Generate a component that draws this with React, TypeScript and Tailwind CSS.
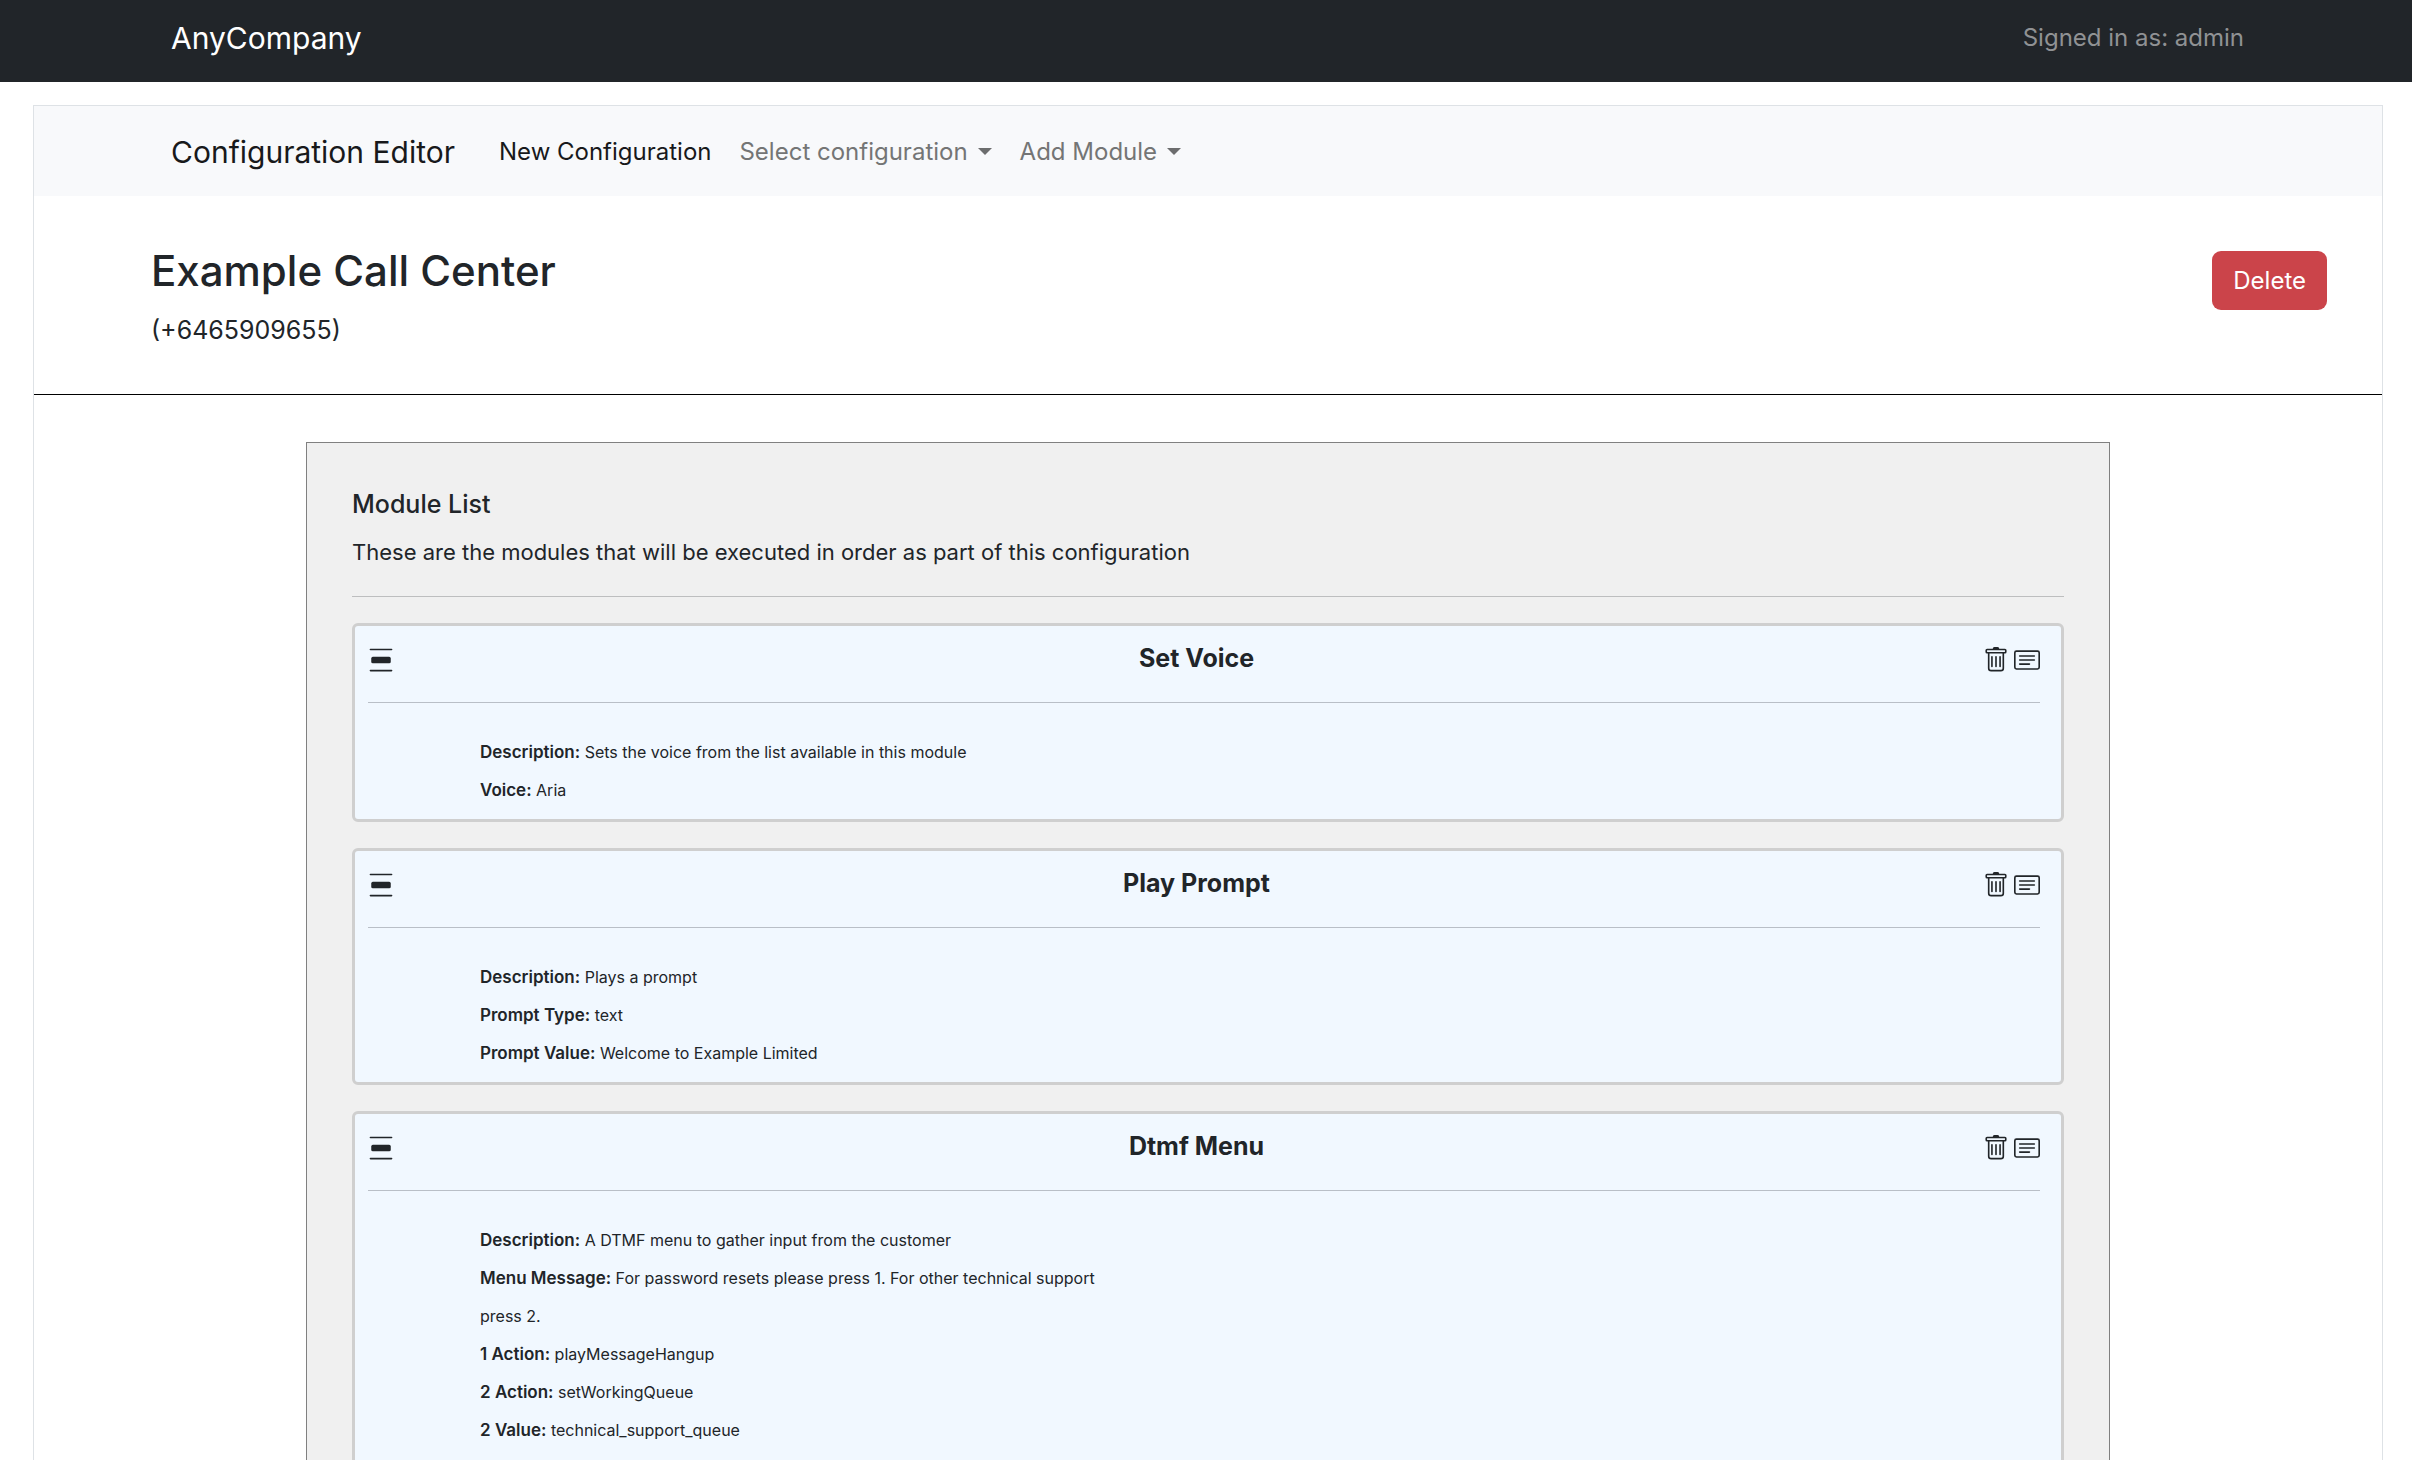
import { BsCardText, BsDistributeVertical, BsTrash } from "react-icons/bs";

type Detail = { label: string; value: string };
type Module = { title: string; details: Detail[] };

const modules: Module[] = [
  {
    title: "Set Voice",
    details: [
      { label: "Description:", value: "Sets the voice from the list available in this module" },
      { label: "Voice:", value: "Aria" },
    ],
  },
  {
    title: "Play Prompt",
    details: [
      { label: "Description:", value: "Plays a prompt" },
      { label: "Prompt Type:", value: "text" },
      { label: "Prompt Value:", value: "Welcome to Example Limited" },
    ],
  },
  {
    title: "Dtmf Menu",
    details: [
      { label: "Description:", value: "A DTMF menu to gather input from the customer" },
      {
        label: "Menu Message:",
        value: "For password resets please press 1. For other technical support press 2.",
      },
      { label: "1 Action:", value: "playMessageHangup" },
      { label: "2 Action:", value: "setWorkingQueue" },
      { label: "2 Value:", value: "technical_support_queue" },
    ],
  },
];

function Dropdown({ label }: { label: string }) {
  return (
    <button type="button" aria-haspopup="menu" className="flex items-center gap-2.5 text-[#747575]">
      {label}
      <span className="mb-0.5 border-x-[7px] border-t-[7px] border-x-transparent border-t-[#6c6d6e]" />
    </button>
  );
}

function ModuleCard({ title, details }: Module) {
  return (
    <li className="rounded-md border-3 border-[#cfcfcf] bg-[#f1f8ff] pt-[13px] pr-[21px] pb-2.5 pl-[13px] last:min-h-96">
      <div className="grid grid-cols-[auto_1fr_auto] items-start border-b border-[#b9bfc7] pb-[25px]">
        <button type="button" aria-label={`Reorder ${title}`} className="pt-2 text-[26px]">
          <BsDistributeVertical />
        </button>
        <h3 className="pl-4 text-center text-[25px] leading-[38px] font-bold">{title}</h3>
        <div className="flex gap-[5px] pt-2 text-[26px]">
          <button type="button" aria-label={`Remove ${title}`}>
            <BsTrash />
          </button>
          <button type="button" aria-label={`Edit ${title}`}>
            <BsCardText />
          </button>
        </div>
      </div>
      <dl className="ml-28 max-w-[640px] pt-[30px] text-base leading-[38px]">
        {details.map(({ label, value }) => (
          <div key={label}>
            <dt className="inline text-[17px] leading-[38px] font-semibold">{label}</dt>{" "}
            <dd className="inline">{value}</dd>
          </div>
        ))}
      </dl>
    </li>
  );
}

export default function App() {
  return (
    <div className="h-screen overflow-hidden bg-white font-['Inter',sans-serif] text-2xl text-[#212529]">
      <header className="flex items-center justify-between bg-[#212529] pt-[15px] pr-[168px] pb-[21px] pl-[171px] leading-[46px]">
        <a href="#" className="text-3xl leading-[46px] text-white">
          AnyCompany
        </a>
        <span className="text-[#909294]">Signed in as: admin</span>
      </header>

      <main className="mt-[23px] mr-[29px] ml-[33px] border border-[#dee2e6]">
        <nav className="flex items-center bg-[#f8f9fb] px-[137px] pt-[23px] pb-[21px] leading-[46px]">
          <a href="#" className="mr-11 text-3xl leading-[46px] text-[#18191b]">
            Configuration Editor
          </a>
          <div className="flex gap-7">
            <a href="#" className="text-[#18191b]">
              New Configuration
            </a>
            <Dropdown label="Select configuration" />
            <Dropdown label="Add Module" />
          </div>
        </nav>

        <section className="flex items-start justify-between border-b border-black pr-[55px] pb-[45px] pl-[117px]">
          <div className="pt-[50px]">
            <h1 className="text-[42px] leading-[50px] font-medium">Example Call Center</h1>
            <p className="mt-[15px] text-[25px] leading-[38px]">(+6465909655)</p>
          </div>
          <button
            type="button"
            className="mt-[55px] rounded-[9px] bg-[#cb444a] px-[21px] py-[10px] leading-[39px] text-white"
          >
            Delete
          </button>
        </section>

        <section className="mx-[272px] mt-[47px] border border-[#808080] bg-[#f0f0f0] px-[45px] pt-[42px] pb-12">
          <h2 className="text-[25px] leading-[38px] font-medium">Module List</h2>
          <p className="mt-3 border-b border-[#bdbebf] pb-[27px] text-[22px] leading-[34px]">
            These are the modules that will be executed in order as part of this configuration
          </p>
          <ul className="mt-[26px] flex flex-col gap-[26px]">
            {modules.map((module) => (
              <ModuleCard key={module.title} {...module} />
            ))}
          </ul>
        </section>
      </main>
    </div>
  );
}
